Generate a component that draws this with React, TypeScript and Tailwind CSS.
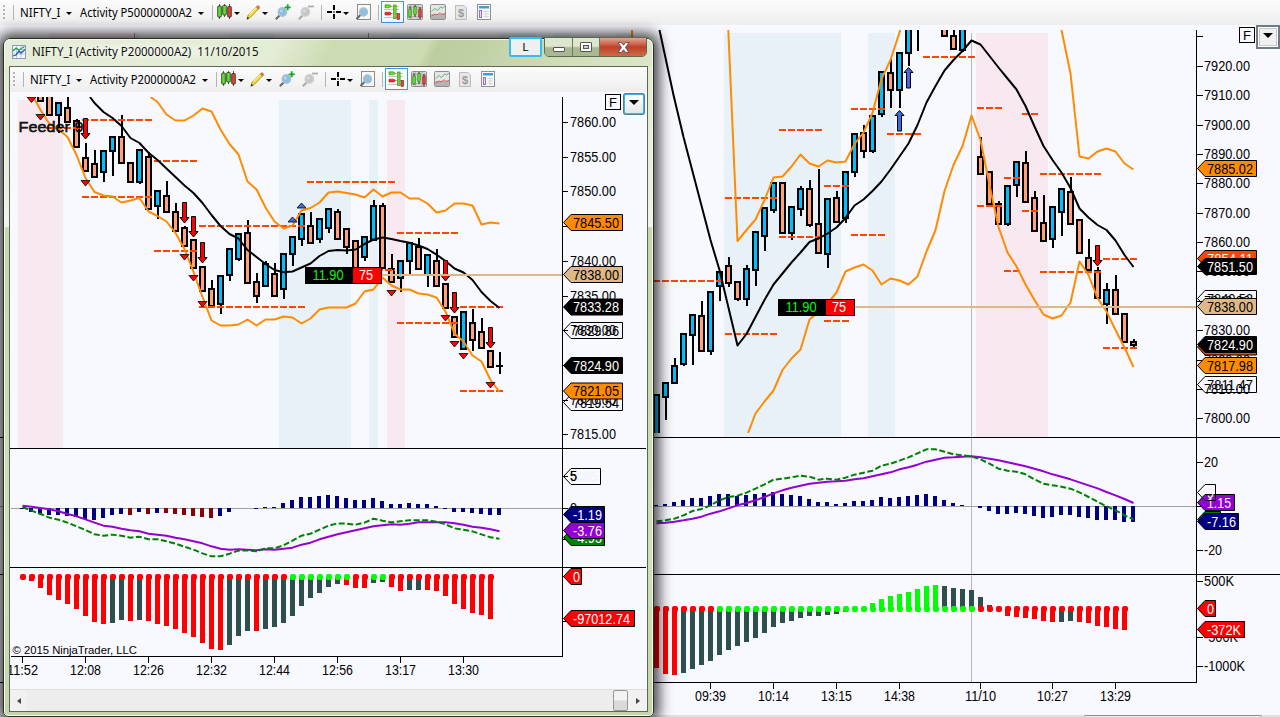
import React from "react";

type Candle = [number, "b" | "s", number, number, number, number];
type Pt = [number, number];
type Dash = [number, number, number];

const SALMON = "#ffa07a";
const SKY = "#00bfff";
const ORANGE = "#ff8c00";
const NAVY = "#000080";

/* ---------- chart primitives ---------- */

const num = (s: string): number[] => s.trim().split(/\s+/).map(Number);

function Txt({ x, y, w, children, fill = "#000", anchor = "start", size = 14 }: { x: number; y: number; w: number; children: string; fill?: string; anchor?: "start" | "middle"; size?: number }) {
  return (
    <text x={x} y={y} textLength={w} lengthAdjust="spacingAndGlyphs" textAnchor={anchor} fontSize={size} fill={fill} style={{ fontFamily: '"Liberation Sans", Arial, sans-serif' }}>
      {children}
    </text>
  );
}

function Candles({ x0, data }: { x0: number; data: Candle[] }) {
  return (
    <g shapeRendering="crispEdges">
      {data.map(([i, c, top, bottom, hi, lo]) => {
        const x = x0 + 9 * i;
        return (
          <g key={i}>
            <rect x={x - 1} y={hi} width={2} height={lo - hi} fill="#000" />
            <rect x={x - 3.5} y={top} width={7} height={bottom - top} fill="#000" />
            {bottom - top > 4 && <rect x={x - 1.5} y={top + 2} width={3} height={bottom - top - 4} fill={c === "b" ? SKY : SALMON} />}
          </g>
        );
      })}
    </g>
  );
}

function Line({ pts, color, width = 2, dash }: { pts: Pt[]; color: string; width?: number; dash?: string }) {
  return <polyline points={pts.map((p) => p.join(",")).join(" ")} fill="none" stroke={color} strokeWidth={width} strokeDasharray={dash} strokeLinejoin="round" />;
}

const series = (x0: number, first: number, ys: number[]): Pt[] => ys.map((y, i) => [x0 + 9 * (first + i), y]);

function Dashes({ data }: { data: Dash[] }) {
  return (
    <g shapeRendering="crispEdges">
      {data.map(([y, a, b]) => (
        <line key={`${y}-${a}`} x1={a} x2={b} y1={y} y2={y} stroke="#ff4500" strokeWidth={2} strokeDasharray="7 2" />
      ))}
    </g>
  );
}

function Arrow({ x, y, up }: { x: number; y: number; up?: boolean }) {
  const d = up ? "M0,0 L4.5,5 L2,5 L2,20.5 L-2,20.5 L-2,5 L-4.5,5 Z" : "M-2,0 L2,0 L2,15 L4.5,15 L0,20.5 L-4.5,15 L-2,15 Z";
  return <path d={d} transform={`translate(${x},${y})`} fill={up ? "#4169e1" : "#f00"} stroke="#000" strokeWidth={1} />;
}

function Tri({ x, y, up }: { x: number; y: number; up?: boolean }) {
  return <path d={up ? "M0,0 L4.5,5 L-4.5,5 Z" : "M-4.5,0 L4.5,0 L0,5.5 Z"} transform={`translate(${x},${y + 0.5})`} fill={up ? "#4169e1" : "#f00"} stroke="#000" strokeWidth={0.8} />;
}

function Tag({ x, y, r, w, t, bg, fg = "#000" }: { x: number; y: number; r: number; w: number; t: string; bg: string; fg?: string }) {
  return (
    <g>
      <path d={`M${x},${y} L${x + 7.5},${y - 8} L${r},${y - 8} L${r},${y + 8} L${x + 7.5},${y + 8} Z`} fill={bg} stroke="#000" strokeWidth={1} />
      <Txt x={x + 9.5} y={y + 5} w={w} fill={fg}>{t}</Txt>
    </g>
  );
}

function TradeBox({ x, y }: { x: number; y: number }) {
  return (
    <g>
      <rect x={x} y={y} width={77} height={17} fill="#000" />
      <rect x={x + 48} y={y + 1} width={28} height={15} fill="#f00" />
      <Txt x={x + 7.5} y={y + 13} w={31} fill="#00ff00">11.90</Txt>
      <Txt x={x + 54} y={y + 13} w={14} fill="#fff">75</Txt>
    </g>
  );
}

function Histogram({ x0, zero, ys, red }: { x0: number; zero: number; ys: number[]; red: number[] }) {
  return (
    <g shapeRendering="crispEdges">
      {ys.map((v, i) =>
        v === 0 ? null : <rect key={i} x={x0 + 9 * i - 2.5} y={v > 0 ? zero : zero + v} width={4} height={Math.abs(v)} fill={red.includes(i) ? "#8b0000" : NAVY} />
      )}
    </g>
  );
}

function Flow({ x0, base, ends, colors, dots }: { x0: number; base: number; ends: number[]; colors: string; dots: string }) {
  const pal: Record<string, string> = { r: "#ff0000", s: "#2f4f4f", g: "#00ff00" };
  return (
    <g>
      {ends.map((e, i) => {
        const x = x0 + 9 * i;
        return <rect key={i} shapeRendering="crispEdges" x={x - 2.5} y={Math.min(e, base)} width={5} height={Math.abs(e - base)} fill={pal[colors[i]]} />;
      })}
      {ends.map((_, i) => (
        <rect key={i} x={x0 + 9 * i - 2.5} y={base - 3} width={6} height={6} rx={2} fill={pal[dots[i]]} />
      ))}
    </g>
  );
}

/* ---------- front chart data ---------- */

const L0 = 22.5;
const leftCandles: Candle[] = [
  [2, "s", 92, 102, 92, 102], [3, "s", 88, 116, 88, 116], [4, "b", 102, 116, 102, 133], [5, "s", 107, 123, 95, 123], [6, "s", 120, 148, 119, 148],
  [7, "s", 157, 172, 143, 172], [8, "s", 163, 178, 150, 178], [9, "b", 150, 173, 150, 182], [10, "b", 136, 152, 136, 176], [11, "s", 136, 164, 115, 164],
  [12, "s", 162, 183, 162, 183], [13, "b", 149, 183, 149, 184], [14, "s", 156, 210, 152, 210], [15, "b", 190, 207, 190, 219], [16, "s", 195, 213, 181, 213],
  [17, "s", 211, 232, 203, 232], [18, "s", 227, 247, 226, 247], [19, "s", 239, 269, 239, 269], [20, "s", 266, 292, 266, 292], [21, "s", 288, 307, 280, 307],
  [22, "b", 275, 305, 275, 314], [23, "b", 248, 276, 248, 281], [24, "b", 233, 260, 233, 261], [25, "s", 232, 284, 220, 284], [26, "s", 281, 297, 273, 303],
  [27, "b", 263, 287, 261, 287], [28, "s", 273, 297, 263, 297], [29, "b", 253, 290, 253, 299], [30, "b", 236, 255, 236, 266], [31, "b", 213, 240, 213, 246],
  [32, "s", 225, 244, 212, 244], [33, "b", 218, 240, 218, 243], [34, "b", 208, 229, 208, 233], [35, "s", 211, 240, 209, 240], [36, "s", 228, 248, 228, 254],
  [37, "s", 240, 272, 240, 272], [38, "b", 236, 258, 236, 261], [39, "b", 205, 241, 200, 241], [40, "s", 205, 269, 203, 269], [41, "s", 268, 283, 254, 283],
  [42, "b", 260, 279, 260, 292], [43, "b", 242, 262, 242, 274], [44, "s", 246, 270, 238, 270], [45, "b", 254, 276, 254, 287], [46, "s", 260, 287, 249, 287],
  [47, "s", 283, 309, 283, 309], [48, "s", 316, 338, 316, 338], [49, "b", 311, 350, 311, 350], [50, "s", 322, 341, 309, 351], [51, "s", 331, 349, 318, 349],
  [52, "s", 350, 368, 350, 368], [53, "s", 365, 367, 352, 374],
];
const leftMA: Pt[] = [[90, 97], ...series(L0, 8, num("103 112 118 126 138 143 152.7 160 168.5 177 185.5 193 203 215 226 234 238.5 250 257 264 270 272.3 271.5 267.5 263.5 256 251 250 250.5 249.5 244 239.5 237.5 239 241 242.7 245.5 249 254.7 261 268.5 272.5 280 292 301 308"))];
const leftUp: Pt[] = [[150.5, 97], ...series(L0, 15, num("102 114.5 120.5 120.5 115.5 108.5 111.5 129.5 144 154.5 181.5 189.5 207.5 221.5 228.5 225.5 210.5 208 202.5 192.5 191.5 193 194.5 197.5 189.5 196.5 192.5 192.5 198.5 198.5 203.5 212.5 210.5 203.5 203.5 205.5 224.5 222.5 223.5"))];
const leftLow: Pt[] = [[33.5, 97], ...series(L0, 2, num("110 124 129 137 155 178 192 195.5 196.5 202.5 200.5 198 211.5 216 221.5 233 249 272 297 320.5 325.5 325.5 324.5 319.5 325.5 319.5 319.5 316.5 317.5 323.5 318.5 309.5 307.5 307.5 307.5 303.5 291.5 289.5 277.5 285.5 289.5 289.5 293.5 294.5 297.5 311.5 333.5 341.5 355.5 361.5 380 392"))];
const leftDashes: Dash[] = [[120, 82, 152], [128, 46, 80], [161, 154, 197], [197, 82, 152], [226, 199, 305], [182, 307, 395], [251, 154, 197], [307, 199, 305], [233, 397, 458], [270, 340, 395], [323, 397, 458], [307, 460, 503], [391, 460, 503]];
const leftHist = num("1 4 6 7 7 8 9 11 12 10 7 6 7 4 6 5 5 6 7 8 9 10 8 4 0 0 1 -1 -1 -5 -8 -11 -11 -12 -13 -12 -10 -8 -8 -10 -7 -4 -4 -5 -4 -4 -2 1 4 4 5 6 7 7");
const leftPurple = num("197 200 204 208 214 222 229 238 248 257 260 266 271 274 281 284 287 293 298 304 310 319 326 329 328 329 331 328 329 326 323 314 308 298 290 283 277 271 265 259 256 253 254 251 247 247 247 247 250 254 260 263 268 274").map((v) => 440 + v / 3);
const leftGreen = num("201 212 222 233 239 248 259 270 283 287 284 287 293 290 298 298 304 311 320 329 340 349 349 341 332 331 334 325 325 316 302 287 281 269 257 250 251 254 248 236 242 247 244 241 241 241 245 253 265 269 274 283 292 296").map((v) => 440 + v / 3);
const leftFlow = num("414 423 444 465 480 492 507 528 546 552 549 540 543 540 543 552 558 567 579 591 609 627 630 615 588 573 573 567 561 549 528 498 474 459 441 432 435 444 444 429 426 441 453 450 450 450 453 468 492 507 519 525 537").map((v) => 440 + v / 3);
const leftFlowC = "rrrrrrrrrrssrsrrrrrrrrrsssrsssssssssrrrssrrssrrrrrrrr";
const leftDots = "rrrrrrrrrrrrrrrrrrrrrrrrrrrrrrgggggggrrggrrrrrrrrrrrr";

function FrontChart() {
  const axis: [string, number][] = [["7860.00", 122.5], ["7855.00", 157.5], ["7850.00", 191.5], ["7840.00", 261.5], ["7835.00", 296.5], ["7830.00", 330.5], ["7820.00", 400.5], ["7815.00", 434.5]];
  const times = ["11:52", "12:08", "12:26", "12:32", "12:44", "12:56", "13:17", "13:30"];
  return (
    <svg width={636} height={597} viewBox="10 92 636 597" className="block bg-[#f8f8ff]">
      <defs>
        <clipPath id="frontPrice"><rect x={10} y={97} width={636} height={351} /></clipPath>
      </defs>
      <g shapeRendering="crispEdges">
        <rect x={18} y={100} width={45} height={348} fill="#f8e8f0" />
        <rect x={279} y={100} width={72} height={348} fill="#e8f1f8" />
        <rect x={369} y={100} width={9} height={348} fill="#e8f1f8" />
        <rect x={387} y={100} width={18} height={348} fill="#f8e8f0" />
      </g>
      <g clipPath="url(#frontPrice)">
        <Candles x0={L0} data={leftCandles} />
        <rect x={496} y={365} width={7} height={2} fill="#000" />
        <Dashes data={leftDashes} />
        <Line pts={leftMA} color="#000" />
        <Line pts={leftUp} color={ORANGE} />
        <Line pts={leftLow} color={ORANGE} />
        {([[85.5, 118.5], [184.5, 202.5], [193.5, 216.5], [202.5, 242.5], [445.5, 260.5], [454.5, 292.5], [490.5, 327.5]] as Pt[]).map(([x, y]) => <Arrow key={x} x={x} y={y} />)}
        {([[31.5, 96.5], [40.5, 114], [85.5, 180], [184.5, 254], [193.5, 275], [202.5, 301], [391.5, 290], [445.5, 315], [454.5, 341], [463.5, 353], [490.5, 382]] as Pt[]).map(([x, y]) => <Tri key={x} x={x} y={y} />)}
        <Tri x={292.5} y={216.5} up />
        <Tri x={301.5} y={202.5} up />
      </g>
      <text x={18.5} y={132} textLength={65} lengthAdjust="spacingAndGlyphs" fontSize={15} fill="#000" stroke="#000" strokeWidth={0.5} fillOpacity={0.9} style={{ fontFamily: '"Liberation Sans", Arial, sans-serif' }}>Feeder 9</text>
      <rect x={382} y={274} width={180} height={2} fill="#deb887" />
      <TradeBox x={305} y={267} />
      <g shapeRendering="crispEdges" fill="#000">
        <rect x={10} y={448} width={636} height={1} />
        <rect x={10} y={567} width={636} height={1} />
        <rect x={11} y={656} width={552} height={1} />
        <rect x={562} y={97} width={1} height={560} />
        <rect x={11} y={508} width={551} height={1} fill="#a0a0a0" />
        {[122, 157, 191, 226, 261, 296, 330, 365, 400, 434, 476, 508, 539, 576, 621].map((y) => <rect key={y} x={562} y={y} width={6} height={1} />)}
        {times.map((t, i) => <rect key={t} x={22 + 63 * i} y={656} width={1} height={7} />)}
      </g>
      {times.map((t, i) => <Txt key={t} x={22.5 + 63 * i} y={675} w={31} anchor="middle">{t}</Txt>)}
      {axis.map(([t, y]) => <Txt key={t} x={570} y={y + 4.5} w={46}>{t}</Txt>)}
      <Histogram x0={L0} zero={508} ys={leftHist} red={[12, 14, 16, 17, 18, 19, 20, 21]} />
      <Line pts={series(L0, 0, leftPurple)} color="#9400d3" />
      <Line pts={series(L0, 0, leftGreen)} color="#008000" dash="6 2.5" />
      <Flow x0={L0} base={577} ends={leftFlow} colors={leftFlowC} dots={leftDots} />
      <Txt x={12.5} y={654} w={124.5} size={11.5}>© 2015 NinjaTrader, LLC</Txt>
      <Txt x={570} y={481} w={7}>5</Txt>
      <Txt x={570} y={512.5} w={7}>0</Txt>
      <Tag x={563.5} y={222.5} r={622.5} w={46} t="7845.50" bg={ORANGE} />
      <Tag x={563.5} y={274.5} r={622.5} w={46} t="7838.00" bg="#deb887" />
      <Tag x={563.5} y={307} r={622.5} w={46} t="7833.28" bg="#000" fg="#fff" />
      <Tag x={563.5} y={330.5} r={622.5} w={46} t="7829.86" bg="none" />
      <Tag x={563.5} y={365.5} r={622.5} w={46} t="7824.90" bg="#000" fg="#fff" />
      <Tag x={563.5} y={402.5} r={622.5} w={46} t="7819.54" bg="none" />
      <Tag x={563.5} y={391} r={622.5} w={46} t="7821.05" bg={ORANGE} />
      <Tag x={563.5} y={476.5} r={600.5} w={24} t="4.95" bg="none" fg="#f2f2f8" />
      <Txt x={570} y={481} w={7}>5</Txt>
      <Tag x={563.5} y={537.5} r={604.5} w={29} t="-4.95" bg="#008000" fg="#fff" />
      <Tag x={563.5} y={514.5} r={604.5} w={29} t="-1.19" bg={NAVY} fg="#fff" />
      <Tag x={563.5} y={530.5} r={604.5} w={29} t="-3.76" bg="#9400d3" fg="#fff" />
      <Tag x={563.5} y={576.5} r={581.5} w={7} t="0" bg="#f00" fg="#fff" />
      <Tag x={563.5} y={618.5} r={634.5} w={57} t="-97012.74" bg="#f00" fg="#fff" />
    </svg>
  );
}

/* ---------- back chart data ---------- */

const R0 = 656.5;
const rightCandles: Candle[] = [
  [0, "b", 394, 440, 394, 440], [1, "b", 382, 398, 382, 420], [2, "b", 365, 384, 358, 384], [3, "b", 333, 365, 333, 366], [4, "b", 314, 336, 314, 365],
  [5, "s", 315, 352, 301, 352], [6, "b", 291, 352, 291, 355], [7, "b", 271, 287, 271, 301], [8, "s", 265, 284, 257, 287], [9, "s", 281, 300, 281, 301],
  [10, "b", 268, 300, 265, 306], [11, "b", 231, 271, 231, 286], [12, "b", 207, 237, 207, 251], [13, "b", 182, 211, 182, 213], [14, "s", 182, 234, 182, 234],
  [15, "b", 206, 234, 206, 240], [16, "b", 188, 210, 186, 216], [17, "s", 188, 226, 180, 227], [18, "s", 223, 254, 169, 254], [19, "b", 198, 255, 198, 268],
  [20, "s", 197, 223, 191, 223], [21, "b", 171, 219, 171, 223], [22, "b", 133, 173, 133, 177], [23, "s", 132, 152, 125, 158], [24, "b", 115, 152, 115, 153],
  [25, "b", 71, 115, 71, 117], [26, "s", 72, 91, 59, 108], [27, "b", 52, 91, 52, 108], [28, "b", 25, 54, 25, 66], [29, "s", 25, 26, 30, 51],
  [32, "s", 25, 37, 25, 37], [33, "s", 35, 50, 25, 50], [34, "b", 25, 51, 25, 52], [36, "s", 156, 175, 137, 175], [37, "s", 171, 205, 171, 205],
  [38, "s", 203, 225, 201, 225], [39, "b", 185, 225, 185, 226], [40, "b", 161, 186, 161, 197], [41, "s", 162, 203, 151, 203], [42, "s", 197, 232, 191, 232],
  [43, "s", 222, 242, 195, 242], [44, "b", 206, 240, 206, 248], [45, "b", 188, 213, 188, 236], [46, "s", 191, 225, 177, 225], [47, "s", 219, 254, 219, 254],
  [48, "s", 257, 271, 239, 271], [49, "s", 270, 299, 267, 299], [50, "b", 289, 305, 283, 324], [51, "s", 289, 315, 275, 315], [52, "s", 313, 343, 313, 343],
  [53, "s", 341, 346, 339, 347],
];
const rightMA: Pt[] = [[659.5, 30], [673.5, 95], [683.5, 137], [710.5, 240], [719.5, 270], ...series(R0, 9, num("345.5 334 317 300 284.5 273.5 262.5 252.5 242 238.5 233.5 227.5 218 205.5 199.5 191 181.5 169.5 156.5 143.5 125 102.5 86 70.5 60 51 40.5 44.5 56 67.5 78.5 89.5 106 126.5 146 160 172.5 188 208.5 217.5 225 230 240.5 255 267"))];
const rightUp1: Pt[] = [[728.3, 30], ...series(R0, 9, num("241 230 219.5 200 177.5 176.5 166.5 154.5 163.5 166.5 160.5 162.5 161.5 144 132.5 113 79 60")), [900.3, 30]];
const rightUp2: Pt[] = [[1061.5, 30], ...series(R0, 46, num("73.5 156.5 158.5 151.5 148.5 151.5 163.5 169.5"))];
const rightLow: Pt[] = [[748, 433], ...series(R0, 11, num("413.5 401.5 390.5 370 358.5 349.5 319.5 312 303.5 292.5 271.5 267.5 264.5 270.5 284.5 278.5 280.5 284.5 276.5 251.5 230 191 165 146 115.5 140 185 227 252.5 266.5 284.5 300 314.5 318.5 315.5 302.5 261.5 275 298 311.5 330 347.5 367"))];
const rightDashes: Dash[] = [[281, 653, 723], [334, 725, 777], [198, 725, 777], [130, 779, 822], [186, 824, 849], [109, 851, 885], [134, 887, 921], [57, 923, 975], [235, 851, 885], [237, 779, 822], [321, 824, 849], [108, 977, 1002], [114, 1022, 1038], [178, 1004, 1020], [206, 977, 1002], [211, 1022, 1038], [174, 1040, 1101], [271, 1004, 1020], [272, 1040, 1101], [259, 1103, 1137], [348, 1103, 1137]];
const rightHist = num("-1 -2 -4 -6 -8 -8 -10 -12 -12 -10 -11 -12 -13 -14 -12 -11 -10 -7 -4 -4 -2 -3 -5 -5 -6 -9 -8 -9 -10 -11 -12 -10 -6 -3 -1 0 2 5 8 8 7 8 10 12 11 9 9 11 12 14 14 14 16 16");
const rightPurple = num("280 278 275 271 266 260 251 244 235 226 219 211 201 190 181 173 167 161 158 155 154 152 148 145 139 133 127 118 112 104 95 89 83 82 80 79 82 86 91 97 103 109 116 124 133 140 148 157 166 175 186 196 207 219").map((v) => 430 + v / 3);
const rightGreen = num("274 271 266 256 243 237 226 211 201 197 188 176 163 149 146 142 137 140 149 146 149 143 134 128 122 107 101 92 82 70 58 58 65 73 76 79 88 101 116 122 125 133 148 161 166 170 176 187 201 215 229 241 256 268").map((v) => 430 + v / 3);
const rightFlow = num("714 732 735 729 717 705 693 675 660 648 636 624 609 591 579 573 564 558 558 555 552 545 537 534 519 507 498 492 486 477 468 465 468 474 477 480 501 525 543 558 561 564 567 573 576 576 573 576 579 588 591 597 600").map((v) => 430 + v / 3);
const rightFlowC = "rrrsssssssssssssssssssggggggggggssssssrrrrrrrssrrrrrr";
const rightDots = "rrrrrrrgggggggggggggggggggggggggggggrrrrrrrrrrrrrrrrr";

function BackChart() {
  const axis: [string, number][] = [["7920.00", 66], ["7910.00", 95], ["7900.00", 125], ["7890.00", 154], ["7880.00", 183], ["7870.00", 213], ["7860.00", 242], ["7850.00", 271], ["7840.00", 301], ["7830.00", 330], ["7820.00", 360], ["7810.00", 389], ["7800.00", 418]];
  const times: [string, number][] = [["09:39", 710], ["10:14", 773], ["13:15", 836], ["14:38", 899], ["11/10", 980], ["10:27", 1052], ["13:29", 1115]];
  return (
    <svg width={1280} height={690} viewBox="0 25 1280 690" className="block bg-[#f8f8ff]">
      <defs>
        <clipPath id="backPrice"><rect x={0} y={30} width={1280} height={403} /></clipPath>
      </defs>
      <g shapeRendering="crispEdges">
        <rect x={49} y={33} width={90} height={6} fill="#f8e8f0" />
        {([[229, 45], [391, 27], [500, 36], [553, 18], [616, 18]] as Pt[]).map(([x, w]) => <rect key={x} x={x} y={33} width={w} height={6} fill="#e8f1f8" />)}
        <rect x={134} y={33} width={1} height={6} fill="#999" />
        <rect x={368} y={33} width={1} height={6} fill="#999" />
        <rect x={631} y={30} width={2} height={9} fill={ORANGE} />
        <rect x={724} y={33} width={117} height={404} fill="#e8f1f8" />
        <rect x={868} y={33} width={27} height={404} fill="#e8f1f8" />
        <rect x={976} y={33} width={72} height={404} fill="#f8e8f0" />
        <rect x={971} y={33} width={1} height={649} fill="#b8b8b8" />
      </g>
      <g clipPath="url(#backPrice)">
        <Candles x0={R0} data={rightCandles} />
        <Dashes data={rightDashes} />
        <Line pts={rightMA} color="#000" />
        <Line pts={rightUp1} color={ORANGE} />
        <Line pts={rightUp2} color={ORANGE} />
        <Line pts={rightLow} color={ORANGE} />
        <Arrow x={1097.5} y={245.5} />
        <Arrow x={899.5} y={110.5} up />
        <Arrow x={908.5} y={67.5} up />
      </g>
      <rect x={855} y={306} width={342} height={2} fill="#deb887" />
      <TradeBox x={778} y={299} />
      <g shapeRendering="crispEdges" fill="#000">
        <rect x={0} y={437} width={1280} height={1} />
        <rect x={0} y={574} width={1280} height={1} />
        <rect x={0} y={682} width={1197} height={1} />
        <rect x={1196} y={30} width={1} height={653} />
        <rect x={0} y={506} width={1196} height={1} fill="#a0a0a0" />
        {[36, 66, 95, 125, 154, 183, 213, 242, 271, 301, 330, 360, 389, 418, 462, 506, 550, 581, 637, 666].map((y) => <rect key={y} x={1196} y={y} width={7} height={1} />)}
        {times.map(([t, x]) => <rect key={t} x={x} y={682} width={1} height={7} />)}
      </g>
      {times.map(([t, x]) => <Txt key={t} x={x + 0.5} y={701} w={31} anchor="middle">{t}</Txt>)}
      {axis.map(([t, y]) => <Txt key={t} x={1204} y={y + 5} w={46}>{t}</Txt>)}
      <Histogram x0={R0} zero={506} ys={rightHist} red={[]} />
      <Line pts={series(R0, 0, rightPurple)} color="#9400d3" />
      <Line pts={series(R0, 0, rightGreen)} color="#008000" dash="6 2.5" />
      <Flow x0={R0} base={609} ends={rightFlow} colors={rightFlowC} dots={rightDots} />
      <Txt x={1204} y={467} w={14}>20</Txt>
      <Txt x={1204} y={555} w={18}>-20</Txt>
      <Txt x={1204} y={586} w={30}>500K</Txt>
      <Txt x={1204} y={642} w={34}>-500K</Txt>
      <Txt x={1204} y={671} w={41}>-1000K</Txt>
      <Tag x={1197.5} y={168.5} r={1256.5} w={46} t="7885.02" bg={ORANGE} />
      <Tag x={1197.5} y={258.5} r={1256.5} w={46} t="7854.11" bg="#ff4500" fg="#fff" />
      <Tag x={1197.5} y={266.5} r={1256.5} w={46} t="7851.50" bg="#000" fg="#fff" />
      <Tag x={1197.5} y={298.5} r={1256.5} w={46} t="7840.53" bg="none" />
      <Tag x={1197.5} y={306.5} r={1256.5} w={46} t="7838.00" bg="#deb887" />
      <Tag x={1197.5} y={347} r={1256.5} w={46} t="7824.11" bg="#ff4500" fg="#fff" />
      <Tag x={1197.5} y={344.5} r={1256.5} w={46} t="7824.90" bg="#000" fg="#fff" />
      <Tag x={1197.5} y={365.5} r={1256.5} w={46} t="7817.98" bg={ORANGE} />
      <Tag x={1197.5} y={384.5} r={1256.5} w={46} t="7811.47" bg="none" />
      <Tag x={1197.5} y={519.5} r={1220.5} w={7} t="" bg="#008000" />
      <Tag x={1197.5} y={502.5} r={1234.5} w={24} t="1.15" bg="#9400d3" fg="#fff" />
      <Tag x={1197.5} y={492.5} r={1215.5} w={7} t="9" bg="none" fg="#f8f8ff" />
      <Tag x={1197.5} y={521.5} r={1238.5} w={29} t="-7.16" bg={NAVY} fg="#fff" />
      <Tag x={1197.5} y={608.5} r={1215.5} w={7} t="0" bg="#f00" fg="#fff" />
      <Tag x={1197.5} y={629.5} r={1244.5} w={34} t="-372K" bg="#f00" fg="#fff" />
    </svg>
  );
}

/* ---------- toolbar ---------- */

const Caret = ({ className = "" }: { className?: string }) => (
  <span className={`mt-0.5 h-0 w-0 shrink-0 border-x-[3px] border-t-[3px] border-x-transparent border-t-black ${className}`} />
);
const Sep = ({ className = "" }: { className?: string }) => <span className={`h-[15px] w-px shrink-0 bg-[#b4b4b4] ${className}`} />;

function Sticks({ w }: { w: number }) {
  return (
    <g stroke="#222" strokeWidth={0.8}>
      <path d={`M2.5 0v15M${w / 2} 0v13M${w - 2.5} 0v15`} stroke="#333" />
      <rect x={0.7} y={2} width={3.6} height={11} rx={0.8} fill="#5fe32b" />
      <rect x={w / 2 - 1.8} y={1.5} width={3.6} height={9.5} rx={0.8} fill="#5fe32b" />
      <rect x={w - 4.3} y={2.5} width={3.6} height={10.5} rx={0.8} fill="#ee4035" />
    </g>
  );
}

function Lens({ on }: { on: boolean }) {
  return (
    <svg width={16} height={16} viewBox="0 0 16 16" className="ml-[7px] shrink-0">
      <path d="M0.8 15.2L5 11" stroke={on ? "#646c74" : "#aaa"} strokeWidth={2} />
      <circle cx={7.4} cy={8} r={4.2} fill={on ? "#86bfe8" : "#c6c6c6"} stroke={on ? "#b5bfca" : "#d0d0d0"} strokeWidth={1.4} />
      <circle cx={6.4} cy={7} r={1.5} fill="#fff" fillOpacity={0.4} />
      <path d={on ? "M12.7 0.3v6M9.7 3.3h6" : "M10 2.5h6"} stroke={on ? "#18a52c" : "#aeaeae"} strokeWidth={1.8} />
    </svg>
  );
}

function Toolbar({ period, periodClass }: { period: string; periodClass: string }) {
  return (
    <div className="flex h-[25px] w-full shrink-0 items-center bg-linear-to-b from-[#fcfcfc] to-[#eeeeee] pb-px font-['Noto_Sans',sans-serif] text-[12px] leading-none text-[#1a1a1a]">
      <span className="ml-[3px] h-[15px] w-[2px] shrink-0 bg-[repeating-linear-gradient(to_bottom,#b5b5b5_0px,#b5b5b5_2px,transparent_2px,transparent_4px)]" />
      <Sep className="ml-2" />
      <svg width={41} height={17} className="ml-1.5 shrink-0 overflow-visible"><text x={0} y={13} textLength={40.5} lengthAdjust="spacingAndGlyphs">NIFTY_I</text></svg>
      <Caret className="ml-[5px]" />
      <div className={`ml-2 flex shrink-0 ${periodClass}`}>
        <svg width="100%" height={17} className="overflow-visible"><text x={0} y={13} textLength={period.length > 19 ? 112 : 106} lengthAdjust="spacingAndGlyphs">{period}</text></svg>
      </div>
      <Caret className="ml-[5px]" />
      <Sep className="ml-2" />
      <svg width={15} height={16} viewBox="0 0 15 16" className="ml-1 shrink-0"><Sticks w={15} /></svg>
      <Caret className="ml-0.5" />
      <svg width={15} height={15} viewBox="0 0 15 15" className="ml-1.5 shrink-0">
        <path d="M1 14l1.2-4L11 1.2c.7-.6 1.4-.5 2 0s.9 1.3 .2 2L4.6 12.2z" fill="#f5d62e" stroke="#a88918" strokeWidth={0.8} />
        <path d="M3.5 9.5L11 2" stroke="#fff3a0" strokeWidth={1.2} />
        <path d="M10 2.3L11.2 1.1c.8-.7 2.8 1 2.1 2.1l-1.1 1.2z" fill="#d8685e" />
        <path d="M.6 14.4l.9-2.6 1.8 1.7z" fill="#333" />
      </svg>
      <Caret className="ml-px" />
      <Lens on />
      <Lens on={false} />
      <Sep className="ml-[7px]" />
      <svg width={14} height={14} viewBox="0 0 14 14" className="ml-[5px] shrink-0"><path d="M7 0v5M7 9v5M0 7h5M9 7h5M6.5 7h1" stroke="#000" strokeWidth={2} /></svg>
      <Caret className="ml-0.5" />
      <svg width={15} height={16} viewBox="0 0 15 16" className="ml-[7px] shrink-0">
        <rect x={1.5} y={0.5} width={13} height={15} fill="#f8f8f8" stroke="#8d8d8d" />
        <path d="M0.5 15L5 10.5" stroke="#666" strokeWidth={2} />
        <circle cx={7.5} cy={8} r={4} fill="#8dc0e6" stroke="#b3bcc6" strokeWidth={1.3} />
      </svg>
      <Sep className="ml-[7px]" />
      <div className="ml-0.5 flex h-[22px] w-[23px] shrink-0 items-center justify-center border border-[#3c96ee] bg-[#f9fbfd]">
        <svg width={19} height={18} viewBox="0 0 19 18">
          <path d="M8 3.5h8M1 6.5h15M8 10.5h8M1 14.5h15" stroke="#c4c4c4" />
          <path d="M2 1.8h4.500l2 1.500-2 1.500H2z" fill="#58e02a" stroke="#2f8f1b" strokeWidth={0.6} />
          <path d="M8.500 10.500L7 9.200H2v2.800h5z" fill="#ee2e2e" stroke="#9c1d1d" strokeWidth={0.6} />
          <rect x={10.5} y={2} width={2.6} height={13.5} fill="#6bdc2e" stroke="#48752b" strokeWidth={0.6} />
          <rect x={14} y={10.5} width={2.6} height={6} fill="#ee4035" stroke="#7a2b2b" strokeWidth={0.6} />
        </svg>
      </div>
      <svg width={16} height={16} viewBox="0 0 16 16" className="ml-[3px] shrink-0">
        <rect x={0.5} y={0.5} width={15} height={15} rx={1} fill="#d4d4d4" stroke="#8e8e8e" />
        <path d="M1 3.5h14M1 8h14M1 12.5h14M4.5 1v14M11 1v14" stroke="#aaa" strokeWidth={0.7} />
        <path d="M3 2v12M8 1v12M13 3v12" stroke="#222" />
        <rect x={1.8} y={5} width={2.4} height={8} fill="#5fe32b" stroke="#2b7b15" strokeWidth={0.6} />
        <rect x={6.8} y={2.5} width={2.4} height={8} fill="#5fe32b" stroke="#2b7b15" strokeWidth={0.6} />
        <rect x={11.8} y={5} width={2.4} height={8} fill="#ee4035" stroke="#862020" strokeWidth={0.6} />
      </svg>
      <svg width={16} height={16} viewBox="0 0 16 16" className="ml-[7px] shrink-0">
        <rect x={0.5} y={0.5} width={15} height={15} rx={1} fill="#e6e6e6" stroke="#8e8e8e" />
        <rect x={1} y={10} width={14} height={5} fill="#b4b4b4" />
        <path d="M1.5 7.5L5 4.5l2.5 2 3-3.5 2 1L15 2" fill="none" stroke="#49b66d" strokeWidth={0.9} />
        <path d="M1.5 12L5 10l2 .8 3-2 2 1.5 3-.8" fill="none" stroke="#e0504a" strokeWidth={0.9} />
      </svg>
      <svg width={12} height={15} viewBox="0 0 12 15" className="ml-[9px] shrink-0">
        <path d="M.5.5h8.5l2.5 2.5v11.5H.5z" fill="#e6e6e6" stroke="#bcbcbc" />
        <text x={6} y={11.8} fontSize={11} fontWeight={700} textAnchor="middle" fill="#9b9b9b" style={{ fontFamily: '"Liberation Sans", sans-serif' }}>$</text>
      </svg>
      <svg width={14} height={16} viewBox="0 0 14 16" className="ml-[10px] shrink-0">
        <rect x={0.5} y={0.5} width={13} height={15} fill="#fafafa" stroke="#8f8f8f" />
        <rect x={2} y={2} width={10} height={2.5} fill="#3c9fd8" />
        <rect x={2.5} y={6.5} width={2} height={7} fill="#eadcff" stroke="#9a62f0" />
        <path d="M6.5 7.5H12M6.5 10H12M6.5 12.5H12M9 6v8" stroke="#d0d0d8" strokeWidth={0.8} />
      </svg>
    </div>
  );
}

const FBox = ({ className }: { className: string }) => (
  <span className={`absolute flex h-[16px] w-[16px] items-center justify-center border border-black bg-[#f8f8ff] font-['Liberation_Sans',sans-serif] text-[13px] leading-none text-black ${className}`}>F</span>
);

/* ---------- floating window ---------- */

function FloatingWindow() {
  return (
    <div className="absolute left-[3px] top-[38px] flex h-[679px] w-[651px] flex-col rounded-t-[7px] rounded-b-[5px] border border-[#2b2f2b] bg-[linear-gradient(to_bottom,#dfe9cd_0px,#e9f0de_150px,#f1f5ec_187px,#c6d7ac_189px,#c9d9b0_300px,#cfdfb8_520px,#c4d5a9_679px)] px-[5px] pb-[4px] shadow-[0_0_14px_5px_rgba(0,0,0,0.75),inset_0_0_0_1px_#f3f8ea]">
      <div className="-mx-[4px] flex h-[27px] items-center rounded-t-[6px] bg-[linear-gradient(115deg,#e6eed9_0px,#e3ecd5_250px,#cddbb3_300px,#cddbb3_385px,#bccda0_395px,#c0d0a5_430px,#d4e1be_540px,#e2ecd3_650px)] pl-[7px] shadow-[inset_0_1px_0_0_#f3f8ea]">
        <svg width={14} height={14} viewBox="0 0 14 14" className="-mt-0.5 shrink-0">
          <rect x={0.5} y={0.5} width={13} height={13} fill="#f5f8fd" stroke="#8c9cba" />
          <path d="M1 4.5h12M1 9h12M4.5 1v12M9 1v12" stroke="#a5b2cc" strokeWidth={0.7} />
          <path d="M1 6l3-3 3 2 5.5-3.5" fill="none" stroke="#24a44b" strokeWidth={1.3} />
          <path d="M1 11l3-1 3-4 2 2 4-3.5" fill="none" stroke="#2457b8" strokeWidth={1.3} />
        </svg>
        <div className="-mt-[3px] ml-[6px] bg-[radial-gradient(closest-side,rgba(255,255,255,0.65),transparent)]">
          <svg width={227} height={18} className="block overflow-visible font-['Noto_Sans',sans-serif] text-[12px]">
            <text x={0} y={13.5} textLength={226.5} lengthAdjust="spacingAndGlyphs" fill="#111" xmlSpace="preserve">{"NIFTY_I (Activity P2000000A2)  11/10/2015"}</text>
          </svg>
        </div>
        <div className="ml-auto flex h-full items-start pr-[5px]">
          <div className="-mt-[2px] mr-[2px] flex h-[20px] w-[33px] items-center justify-center rounded-[2px] border-2 border-[#35bdf0] bg-[#efefef] font-['Liberation_Sans',sans-serif] text-[11px] leading-none text-black">L</div>
          <div className="-mt-[2px] flex h-[20px] overflow-hidden rounded-b-[5px] border border-[#5d6950]">
            <div className="flex w-[28px] items-center justify-center border-r border-[#6d795f] bg-linear-to-b from-[#dde6cf] from-45% to-[#a9b891] to-55%">
              <span className="mt-[5px] h-[5px] w-[12px] rounded-[1px] border border-[#555] bg-white" />
            </div>
            <div className="flex w-[27px] items-center justify-center border-r border-[#6d795f] bg-linear-to-b from-[#dde6cf] from-45% to-[#a9b891] to-55%">
              <span className="flex h-[10px] w-[12px] items-center justify-center rounded-[1px] border border-[#555] bg-white"><span className="h-[4px] w-[6px] border border-[#555] bg-[#c5d1b5]" /></span>
            </div>
            <div className="flex w-[46px] items-center justify-center bg-linear-to-b from-[#e0a595] from-0% via-[#bf3f28] via-50% to-[#cf6a48]">
              <svg width={13} height={11} viewBox="0 0 13 11"><path d="M1 .6h3.5l2 2.6 2-2.6H12L8.5 5.5 12 10.4H8.5l-2-2.6-2 2.6H1l3.5-4.9z" fill="#fff" stroke="#4b4b55" strokeWidth={0.9} /></svg>
            </div>
          </div>
        </div>
      </div>
      <div className="relative flex flex-1 flex-col border border-[#5d6658] bg-[#f8f8ff]">
        <Toolbar period="Activity P2000000A2" periodClass="w-[107px]" />
        <FrontChart />
        <div className="flex min-h-0 flex-1 items-center border-t border-[#dedede] bg-[#ededed]">
          <div className="flex h-full w-[17px] items-center justify-center bg-[#f1f1f1]"><span className="h-0 w-0 border-y-[3px] border-r-[4px] border-y-transparent border-r-[#444]" /></div>
          <div className="ml-auto h-full w-[15px] rounded-[2px] border border-[#979797] bg-linear-to-b from-[#f3f3f3] from-45% to-[#d9d9d9] to-55%" />
          <div className="flex h-full w-[19px] items-center justify-center bg-[#f1f1f1]"><span className="h-0 w-0 border-y-[3px] border-l-[4px] border-y-transparent border-l-[#444]" /></div>
        </div>
        <FBox className="left-[595px] top-[27px]" />
        <div className="absolute left-[613px] top-[26px] flex h-[22px] w-[22px] items-center justify-center rounded-[3px] border-2 border-[#36b9ea] bg-linear-to-b from-white to-[#e6e6e6] outline -outline-offset-1 outline-[#5b7e94]">
          <span className="-mt-1 h-0 w-0 border-x-[5px] border-t-[5px] border-x-transparent border-t-black" />
        </div>
      </div>
    </div>
  );
}

export default function App() {
  return (
    <div className="relative flex h-[717px] w-[1280px] flex-col overflow-hidden bg-[#f8f8ff]">
      <Toolbar period="Activity P50000000A2" periodClass="w-[113px]" />
      <BackChart />
      <div className="flex h-[2px] shrink-0 bg-[#dfdfdf]">
        <div className="ml-[1084px] w-[178px] rounded-t-sm border-t border-[#8c8c8c] bg-[#eee]" />
      </div>
      <FBox className="left-[1239px] top-[27px]" />
      <div className="absolute left-[1256px] top-[25px] flex h-[24px] w-[24px] items-center justify-center border-2 border-[#717b87] bg-[#f0f0f0] shadow-[inset_0_0_0_1px_#fff,inset_0_0_0_2px_#c9c9c9]">
        <span className="-mt-1 h-0 w-0 border-x-[5px] border-t-[5px] border-x-transparent border-t-black" />
      </div>
      <FloatingWindow />
    </div>
  );
}
